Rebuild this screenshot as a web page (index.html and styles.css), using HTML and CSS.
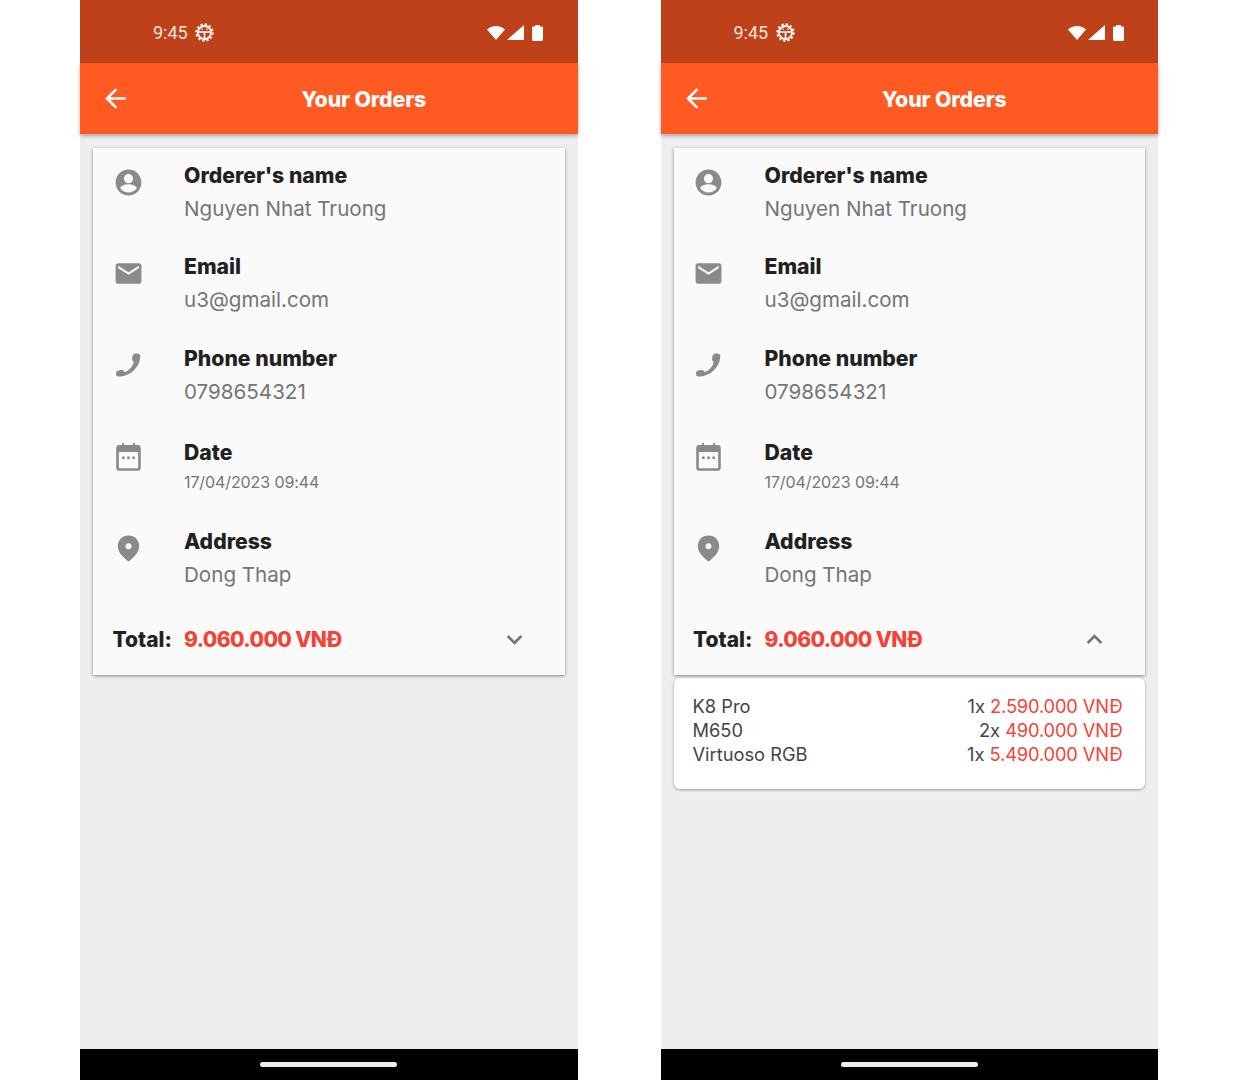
FILE: index.html
```html
<!DOCTYPE html>
<html>
<head>
	<meta charset="utf-8">
	<meta name="viewport" content="width=device-width, initial-scale=1">
	<title>Your Orders</title>
	<link rel="stylesheet" href="styles.css">
</head>
<body>

<svg class="sprite" width="0" height="0">
	<symbol id="i-gear" viewBox="0 0 18 18">
		<circle cx="9" cy="9" r="7.8" fill="none" stroke="#fff" stroke-width="1.800" stroke-dasharray="2.200 1.880"/>
		<circle cx="9" cy="9" r="6.200" fill="none" stroke="#fff" stroke-width="1.800"/>
		<path d="M3.500 8.600h11M9 8.600v5.500" stroke="#fff" stroke-width="1.500" fill="none"/>
		<path d="M6 6h1.200M10.800 6H12" stroke="#fff" stroke-width="1.400" fill="none"/>
	</symbol>
	<symbol id="i-wifi" viewBox="0 0 18 14">
		<path d="M0 3.600C2.400 1.400 5.500 0 9 0s6.600 1.400 9 3.600L9 14z" fill="#fff"/>
	</symbol>
	<symbol id="i-signal" viewBox="0 0 17 15">
		<path d="M17 0v15H0z" fill="#fff"/>
	</symbol>
	<symbol id="i-battery" viewBox="0 0 11 16">
		<path d="M3.200 0h4.600v1.400h2c.7 0 1.200.5 1.200 1.200v12.200c0 .7-.5 1.200-1.200 1.200H1.200C.5 16 0 15.500 0 14.800V2.600c0-.7.500-1.200 1.200-1.200h2z" fill="#fff"/>
	</symbol>
	<symbol id="i-back" viewBox="0 0 24 24">
		<path d="M20 11H7.830l5.590-5.590L12 4l-8 8 8 8 1.410-1.410L7.830 13H20z" fill="#fff"/>
	</symbol>
	<symbol id="i-user" viewBox="0 0 24 24">
		<path d="M12 2C6.480 2 2 6.480 2 12s4.480 10 10 10 10-4.480 10-10S17.520 2 12 2zm0 3.500c1.930 0 3.500 1.570 3.500 3.500S13.930 12.500 12 12.500 8.500 10.930 8.500 9 10.070 5.500 12 5.500zm0 14.200c-2.700 0-5.100-1.300-6.400-3.300.1-1.900 4.300-3 6.400-3s6.300 1.100 6.400 3c-1.300 2-3.700 3.300-6.400 3.300z"/>
	</symbol>
	<symbol id="i-mail" viewBox="0 0 24 24">
		<path d="M20 4H4c-1.100 0-2 .9-2 2v12c0 1.100.9 2 2 2h16c1.100 0 2-.9 2-2V6c0-1.100-.9-2-2-2zm0 4l-8 5-8-5V6l8 5 8-5z"/>
	</symbol>
	<symbol id="i-phone" viewBox="0 0 24 24">
		<path d="M18 2.800c1.300 0 2.900.4 3.100 1.300.3 7.300-5.400 14.400-13 16-1.400.4-4.800.7-5.400-.2-.5-1-.5-2.700.1-3.400.9-.8 3.900-1.300 4.900-.9.600.2.800 1.200 1.400 1.400 3-.6 6.500-4.500 6.900-7.700-.2-.7-1.100-1.100-1.200-1.800-.1-1 .2-3.300.8-3.900.4-.4 1.500-.8 2.400-.8z"/>
	</symbol>
	<symbol id="i-date" viewBox="0 0 24 24">
		<path d="M7 1.500h1.500V3h7V1.500H17V3h2.500C20.900 3 21.500 4.100 21.500 5.500v15c0 1.400-.6 2.500-2 2.500h-15C3.100 23 2.500 21.900 2.500 20.500v-15C2.500 4.100 3.100 3 4.500 3H7zM4.500 8.500v12c0 .3.200.5.500.5h14c.3 0 .5-.2.500-.5v-12zM7 12h2v2H7zm4 0h2v2h-2zm4 0h2v2h-2z"/>
	</symbol>
	<symbol id="i-pin" viewBox="0 0 24 24">
		<path d="M12 2C7.200 2 3.700 5.700 3.700 10.200 3.700 15 8.500 19.400 12 22c3.500-2.600 8.300-7 8.300-11.800C20.300 5.700 16.800 2 12 2zm0 10.500a2.300 2.300 0 1 1 0-4.600 2.300 2.300 0 0 1 0 4.600z"/>
	</symbol>
	<symbol id="i-down" viewBox="0 0 24 24">
		<path d="M7.400 8.600L12 13.200l4.600-4.600L18 10l-6 6-6-6z"/>
	</symbol>
	<symbol id="i-up" viewBox="0 0 24 24">
		<path d="M7.400 15.400L12 10.800l4.600 4.600L18 14l-6-6-6 6z"/>
	</symbol>
</svg>

<div class="phone">
	<div class="status">
		<span class="time">9:45</span>
		<svg class="ic-gear"><use href="#i-gear"/></svg>
		<svg class="ic-wifi"><use href="#i-wifi"/></svg>
		<svg class="ic-signal"><use href="#i-signal"/></svg>
		<svg class="ic-battery"><use href="#i-battery"/></svg>
	</div>
	<div class="appbar">
		<div class="back"><svg><use href="#i-back"/></svg></div>
		<div class="title">Your Orders</div>
	</div>
	<div class="content">
		<div class="card">
			<div class="row">
				<svg class="icon"><use href="#i-user"/></svg>
				<div><div class="label">Orderer's name</div><div class="value">Nguyen Nhat Truong</div></div>
			</div>
			<div class="row">
				<svg class="icon"><use href="#i-mail"/></svg>
				<div><div class="label">Email</div><div class="value">u3@gmail.com</div></div>
			</div>
			<div class="row">
				<svg class="icon"><use href="#i-phone"/></svg>
				<div><div class="label">Phone number</div><div class="value">0798654321</div></div>
			</div>
			<div class="row">
				<svg class="icon"><use href="#i-date"/></svg>
				<div><div class="label">Date</div><div class="value small">17/04/2023 09:44</div></div>
			</div>
			<div class="row">
				<svg class="icon"><use href="#i-pin"/></svg>
				<div><div class="label">Address</div><div class="value">Dong Thap</div></div>
			</div>
			<div class="total">
				<span class="total-label">Total:</span>
				<span class="total-price">9.060.000 VNĐ</span>
				<svg class="chevron"><use href="#i-down"/></svg>
			</div>
		</div>
	</div>
	<div class="navbar"><div class="pill"></div></div>
</div>

<div class="phone">
	<div class="status">
		<span class="time">9:45</span>
		<svg class="ic-gear"><use href="#i-gear"/></svg>
		<svg class="ic-wifi"><use href="#i-wifi"/></svg>
		<svg class="ic-signal"><use href="#i-signal"/></svg>
		<svg class="ic-battery"><use href="#i-battery"/></svg>
	</div>
	<div class="appbar">
		<div class="back"><svg><use href="#i-back"/></svg></div>
		<div class="title">Your Orders</div>
	</div>
	<div class="content">
		<div class="card">
			<div class="row">
				<svg class="icon"><use href="#i-user"/></svg>
				<div><div class="label">Orderer's name</div><div class="value">Nguyen Nhat Truong</div></div>
			</div>
			<div class="row">
				<svg class="icon"><use href="#i-mail"/></svg>
				<div><div class="label">Email</div><div class="value">u3@gmail.com</div></div>
			</div>
			<div class="row">
				<svg class="icon"><use href="#i-phone"/></svg>
				<div><div class="label">Phone number</div><div class="value">0798654321</div></div>
			</div>
			<div class="row">
				<svg class="icon"><use href="#i-date"/></svg>
				<div><div class="label">Date</div><div class="value small">17/04/2023 09:44</div></div>
			</div>
			<div class="row">
				<svg class="icon"><use href="#i-pin"/></svg>
				<div><div class="label">Address</div><div class="value">Dong Thap</div></div>
			</div>
			<div class="total">
				<span class="total-label">Total:</span>
				<span class="total-price">9.060.000 VNĐ</span>
				<svg class="chevron"><use href="#i-up"/></svg>
			</div>
		</div>
		<div class="details">
			<div class="line"><span>K8 Pro</span><span>1x <em>2.590.000 VNĐ</em></span></div>
			<div class="line"><span>M650</span><span>2x <em>490.000 VNĐ</em></span></div>
			<div class="line"><span>Virtuoso RGB</span><span>1x <em>5.490.000 VNĐ</em></span></div>
		</div>
	</div>
	<div class="navbar"><div class="pill"></div></div>
</div>

</body>
</html>
```

FILE: styles.css
```css
* {
	box-sizing: border-box;
	margin: 0;
	padding: 0;
	font-family: 'Inter', sans-serif;
	font-feature-settings: "calt" 0;
}
body {
	background-color: #fff;
	display: flex;
	gap: 83px;
	padding-left: 80px;
	height: 1080px;
	overflow: hidden;
}
.sprite {
	display: none;
}
.phone {
	width: 497.500px;
	height: 1080px;
	display: flex;
	flex-direction: column;
	background-color: #eee;
}
.status {
	height: 63px;
	background-color: #bf4119;
	display: flex;
	align-items: center;
	padding: 2px 0 0 73px;
	color: #fff;
}
.time {
	font-family: 'Roboto', sans-serif;
	font-size: 18px;
	color: #f7e4dc;
	margin-right: 7px;
	width: 35px;
}
.ic-gear {
	width: 19px;
	height: 19px;
	margin-right: 273px;
}
.ic-wifi {
	width: 18px;
	height: 14px;
	margin-right: 2px;
}
.ic-signal {
	width: 17px;
	height: 15px;
	margin-right: 8px;
}
.ic-battery {
	width: 11px;
	height: 16px;
}
.appbar {
	height: 71px;
	background-color: #ff5a22;
	display: flex;
	align-items: center;
	box-shadow: 0 2px 4px rgba(0, 0, 0, 0.3);
	position: relative;
}
.back {
	width: 70px;
	padding-left: 20px;
	height: 31px;
}
.back svg {
	width: 31px;
	height: 31px;
}
.title {
	flex: 1;
	text-align: center;
	color: #fff;
	font-size: 21.300px;
	font-weight: 800;
	letter-spacing: -0.1px;
}
.content {
	flex: 1;
	padding: 14px 13px 0;
}
.card {
	height: 527px;
	background-color: #fafafa;
	box-shadow: 0 1px 3px rgba(0, 0, 0, 0.45);
	padding-left: 19.500px;
	display: flex;
	flex-direction: column;
	gap: 4.500px;
}
.row {
	height: 87px;
	display: flex;
	align-items: center;
}
.icon {
	width: 31px;
	height: 31px;
	fill: #8a8a8a;
	margin-right: 40.500px;
	margin-bottom: 19px;
	flex: none;
}
.label {
	font-size: 21.200px;
	font-weight: 800;
	color: #212121;
	line-height: 33px;
}
.value {
	font-size: 20.600px;
	color: #757575;
	line-height: 33px;
}
.value.small {
	font-size: 16px;
	letter-spacing: -0.1px;
	line-height: 26px;
	margin-bottom: 2px;
}
.total {
	flex: 1;
	display: flex;
	align-items: center;
	font-size: 21px;
	font-weight: 800;
	margin-top: -4.500px;
	padding-top: 2px;
}
.total-label {
	width: 71.500px;
	color: #212121;
}
.total-price {
	flex: 1;
	color: #f44336;
	letter-spacing: -0.600px;
}
.chevron {
	width: 31px;
	height: 31px;
	fill: #757575;
	margin-right: 35px;
}
.details {
	margin-top: 3px;
	height: 111px;
	background-color: #fff;
	border-radius: 6px;
	box-shadow: 0 1px 3px rgba(0, 0, 0, 0.35);
	padding: 16px 22.500px 0 19px;
}
.line {
	display: flex;
	justify-content: space-between;
	font-size: 18.300px;
	line-height: 24px;
	color: #444;
}
.line em {
	font-style: normal;
	color: #f44336;
	letter-spacing: -0.150px;
}
.navbar {
	height: 31px;
	background-color: #000;
	display: flex;
	justify-content: center;
	padding-top: 13px;
}
.pill {
	width: 137px;
	height: 5px;
	border-radius: 3px;
	background-color: #eee;
}
```
